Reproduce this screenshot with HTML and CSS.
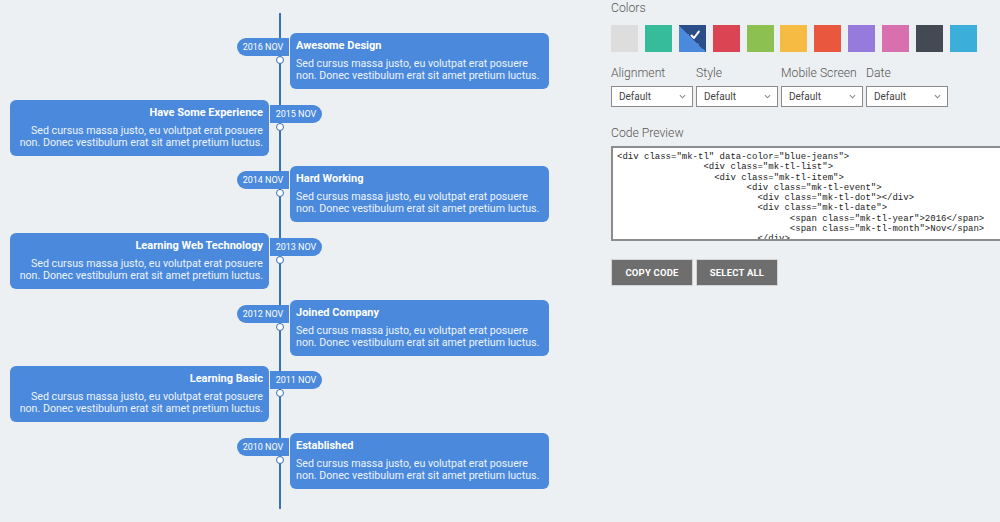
FILE: index.html
```html
<!DOCTYPE html>
<html>
<head>
<meta charset="utf-8">
<link rel="stylesheet" href="styles.css">
</head>
<body>
<div class="page">
  <section class="timeline">
    <div class="tl-item to-right">
      <div class="card"><span class="badge">2016 NOV</span><span class="dot"></span>
        <h3>Awesome Design</h3>
        <p>Sed cursus massa justo, eu volutpat erat posuere<br>non. Donec vestibulum erat sit amet pretium luctus.</p>
      </div>
    </div>
    <div class="tl-item to-left">
      <div class="card"><span class="badge">2015 NOV</span><span class="dot"></span>
        <h3>Have Some Experience</h3>
        <p>Sed cursus massa justo, eu volutpat erat posuere<br>non. Donec vestibulum erat sit amet pretium luctus.</p>
      </div>
    </div>
    <div class="tl-item to-right">
      <div class="card"><span class="badge">2014 NOV</span><span class="dot"></span>
        <h3>Hard Working</h3>
        <p>Sed cursus massa justo, eu volutpat erat posuere<br>non. Donec vestibulum erat sit amet pretium luctus.</p>
      </div>
    </div>
    <div class="tl-item to-left">
      <div class="card"><span class="badge">2013 NOV</span><span class="dot"></span>
        <h3>Learning Web Technology</h3>
        <p>Sed cursus massa justo, eu volutpat erat posuere<br>non. Donec vestibulum erat sit amet pretium luctus.</p>
      </div>
    </div>
    <div class="tl-item to-right">
      <div class="card"><span class="badge">2012 NOV</span><span class="dot"></span>
        <h3>Joined Company</h3>
        <p>Sed cursus massa justo, eu volutpat erat posuere<br>non. Donec vestibulum erat sit amet pretium luctus.</p>
      </div>
    </div>
    <div class="tl-item to-left">
      <div class="card"><span class="badge">2011 NOV</span><span class="dot"></span>
        <h3>Learning Basic</h3>
        <p>Sed cursus massa justo, eu volutpat erat posuere<br>non. Donec vestibulum erat sit amet pretium luctus.</p>
      </div>
    </div>
    <div class="tl-item to-right">
      <div class="card"><span class="badge">2010 NOV</span><span class="dot"></span>
        <h3>Established</h3>
        <p>Sed cursus massa justo, eu volutpat erat posuere<br>non. Donec vestibulum erat sit amet pretium luctus.</p>
      </div>
    </div>
  </section>

  <aside class="panel">
    <div class="label">Colors</div>
    <div class="swatches">
      <span class="sw sw-light"></span>
      <span class="sw sw-mint"></span>
      <span class="sw sw-blue selected"><svg class="check" viewBox="0 0 10 10" width="10" height="10"><path d="M1.5 5.5 L4 8 L8.8 1.6" fill="none" stroke="#fff" stroke-width="2" stroke-linecap="round" stroke-linejoin="round"/></svg></span>
      <span class="sw sw-red"></span>
      <span class="sw sw-grass"></span>
      <span class="sw sw-sun"></span>
      <span class="sw sw-bitter"></span>
      <span class="sw sw-lav"></span>
      <span class="sw sw-pink"></span>
      <span class="sw sw-dark"></span>
      <span class="sw sw-aqua"></span>
    </div>

    <div class="options">
      <div class="opt">
        <div class="label">Alignment</div>
        <div class="select"><span>Default</span><svg viewBox="0 0 8 5" width="7" height="5"><path d="M1 1 L4 4 L7 1" fill="none" stroke="#888" stroke-width="1.2"/></svg></div>
      </div>
      <div class="opt">
        <div class="label">Style</div>
        <div class="select"><span>Default</span><svg viewBox="0 0 8 5" width="7" height="5"><path d="M1 1 L4 4 L7 1" fill="none" stroke="#888" stroke-width="1.2"/></svg></div>
      </div>
      <div class="opt">
        <div class="label">Mobile Screen</div>
        <div class="select"><span>Default</span><svg viewBox="0 0 8 5" width="7" height="5"><path d="M1 1 L4 4 L7 1" fill="none" stroke="#888" stroke-width="1.2"/></svg></div>
      </div>
      <div class="opt">
        <div class="label">Date</div>
        <div class="select"><span>Default</span><svg viewBox="0 0 8 5" width="7" height="5"><path d="M1 1 L4 4 L7 1" fill="none" stroke="#888" stroke-width="1.2"/></svg></div>
      </div>
    </div>

    <div class="label code-label">Code Preview</div>
    <div class="code"><pre>&lt;div class="mk-tl" data-color="blue-jeans"&gt;
                &lt;div class="mk-tl-list"&gt;
                  &lt;div class="mk-tl-item"&gt;
                        &lt;div class="mk-tl-event"&gt;
                          &lt;div class="mk-tl-dot"&gt;&lt;/div&gt;
                          &lt;div class="mk-tl-date"&gt;
                                &lt;span class="mk-tl-year"&gt;2016&lt;/span&gt;
                                &lt;span class="mk-tl-month"&gt;Nov&lt;/span&gt;
                          &lt;/div&gt;</pre></div>

    <div class="buttons">
      <button class="btn">COPY CODE</button>
      <button class="btn">SELECT ALL</button>
    </div>
  </aside>
</div>
</body>
</html>
```

FILE: styles.css
```css
* { box-sizing: border-box; }
html, body {
  margin: 0;
  padding: 0;
  width: 1000px;
  height: 522px;
  overflow: hidden;
  background: #edf0f2;
  font-family: Roboto, "Liberation Sans", sans-serif;
}
.page {
  display: flex;
  align-items: flex-start;
}

/* Timeline */
.timeline {
  margin: 13px 0 0 10px;
  width: 539px;
  padding: 20px 0;
  display: flex;
  flex-direction: column;
  gap: 10.67px;
  background: linear-gradient(#3b6fb5, #3b6fb5) center / 2px 100% no-repeat;
}
.tl-item {
  display: flex;
}
.card {
  position: relative;
  width: 259px;
  height: 56px;
  background: #4a89dc;
  color: #fff;
  border-radius: 6px;
  padding: 6px 6px 0;
}
.to-right .card { margin-left: auto; }
.to-left .card { margin-right: auto; text-align: right; }
.card h3 {
  margin: 0;
  font-size: 11px;
  font-weight: 700;
  line-height: 13px;
  white-space: nowrap;
}
.card p {
  margin: 6px 0 0;
  font-size: 10.65px;
  line-height: 12px;
  white-space: nowrap;
  color: #eef4fc;
}
.badge {
  position: absolute;
  top: 5px;
  height: 18px;
  width: 52px;
  background: #4a89dc;
  color: #fff;
  font-size: 9px;
  line-height: 18px;
  text-align: center;
  white-space: nowrap;
}
.to-right .badge {
  right: calc(100% + 1px);
  border-radius: 9px 0 0 9px;
}
.to-left .badge {
  left: calc(100% + 1px);
  border-radius: 0 9px 9px 0;
}
.dot {
  position: absolute;
  top: 23px;
  width: 8px;
  height: 8px;
  border-radius: 50%;
  background: #fff;
  border: 1.5px solid #3b6fb5;
}
.to-right .dot { left: -14.5px; }
.to-left .dot { right: -14.5px; }

/* Panel */
.panel {
  margin-left: 62px;
  width: 389px;
  display: flex;
  flex-direction: column;
  align-items: flex-start;
}
.label {
  font-size: 12.2px;
  line-height: 16px;
  color: #555;
  font-weight: 300;
  white-space: nowrap;
}
.swatches {
  display: flex;
  gap: 6.9px;
  margin-top: 9px;
}
.sw {
  width: 27px;
  height: 27px;
  display: block;
  position: relative;
}
.sw-light { background: #dddddd; }
.sw-mint { background: #37bc9b; }
.sw-blue { background: linear-gradient(to bottom left, #2b4e88 50%, #4a89dc 50%); }
.sw-red { background: #da4453; }
.sw-grass { background: #8cc152; }
.sw-sun { background: #f6bb42; }
.sw-bitter { background: #e9573f; }
.sw-lav { background: #967adc; }
.sw-pink { background: #d770ad; }
.sw-dark { background: #434a54; }
.sw-aqua { background: #3bafda; }
.check {
  position: absolute;
  top: 5px;
  right: 6px;
}

.options {
  display: flex;
  gap: 3px;
  margin-top: 13px;
}
.opt {
  width: 82px;
  display: flex;
  flex-direction: column;
  gap: 5px;
}
.select {
  width: 82px;
  height: 21px;
  background: #fff;
  border: 1px solid #8a8a8a;
  display: flex;
  align-items: center;
  justify-content: space-between;
  padding: 0 6px 0 7px;
  font-size: 10px;
  color: #444;
}
.code-label {
  margin-top: 18px;
}
.code {
  margin-top: 5px;
  width: 389px;
  height: 95px;
  background: #fff;
  border: 2px solid #8c8c8c;
  border-right: none;
  overflow: hidden;
  padding: 4px 0 0 4px;
}
.code pre {
  margin: 0;
  font-family: "Liberation Mono", "DejaVu Sans Mono", monospace;
  font-size: 9px;
  line-height: 10.3px;
  color: #222;
}
.buttons {
  display: flex;
  gap: 3px;
  margin-top: 18px;
}
.btn {
  width: 82px;
  height: 27px;
  background: #6e6e6e;
  color: #fff;
  border: 1px solid #d4d4d4;
  font-family: Roboto, "Liberation Sans", sans-serif;
  font-size: 9.5px;
  font-weight: 700;
  letter-spacing: 0.2px;
  padding: 0;
}
```
